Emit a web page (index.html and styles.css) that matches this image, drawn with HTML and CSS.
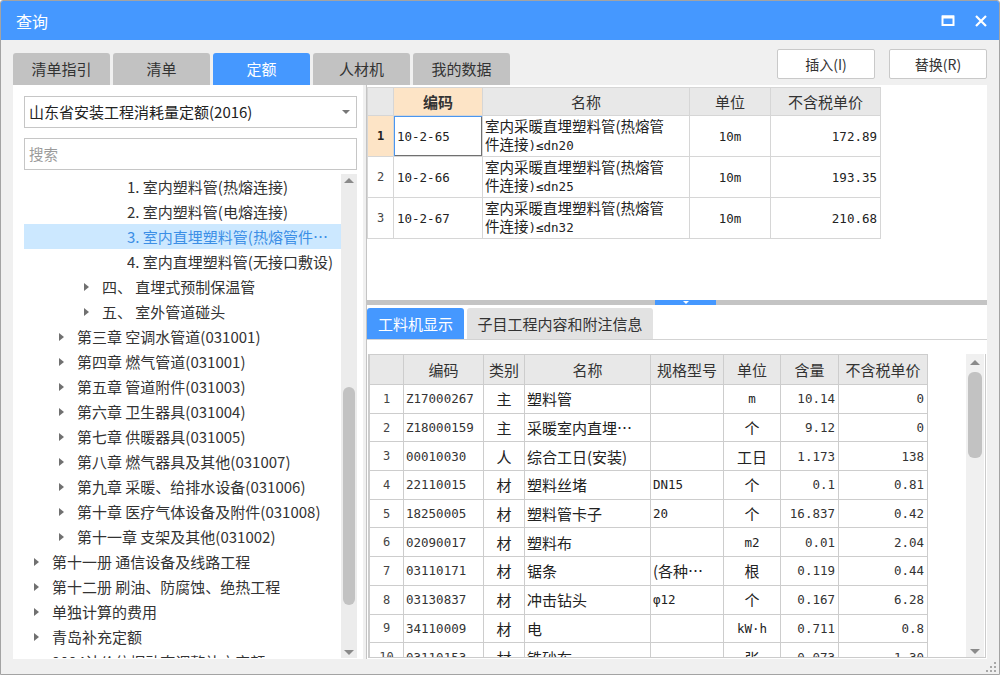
FILE: index.html
```html
<!DOCTYPE html>
<html lang="zh-CN">
<head>
<meta charset="utf-8">
<title>查询</title>
<link rel="stylesheet" href="styles.css">
</head>
<body>
<div class="window">
  <div class="titlebar">
    <span class="title">查询</span>
    <div class="wincontrols">
      <svg class="wbtn" width="14" height="12" viewBox="0 0 14 12"><rect x="1.5" y="1.5" width="11" height="8.5" fill="none" stroke="#fff" stroke-width="2"/><line x1="1" y1="2" x2="13" y2="2" stroke="#fff" stroke-width="3"/></svg>
      <svg class="wbtn" width="14" height="12" viewBox="0 0 14 12"><path d="M2 1 L12 11 M12 1 L2 11" stroke="#fff" stroke-width="2.2" fill="none"/></svg>
    </div>
  </div>
  <div class="body">
    <div class="toprow">
      <div class="tabs">
        <div class="tab">清单指引</div>
        <div class="tab">清单</div>
        <div class="tab active">定额</div>
        <div class="tab">人材机</div>
        <div class="tab">我的数据</div>
      </div>
      <div class="actions">
        <button class="btn">插入(I)</button>
        <button class="btn">替换(R)</button>
      </div>
    </div>
    <div class="main">
      <div class="left">
        <div class="select"><span>山东省安装工程消耗量定额(2016)</span><i class="caret"></i></div>
        <div class="search">搜索</div>
        <div class="treebox">
          <div class="tree">
            <div class="row l4"><i class="tri none"></i><span>1. 室内塑料管(热熔连接)</span></div>
            <div class="row l4"><i class="tri none"></i><span>2. 室内塑料管(电熔连接)</span></div>
            <div class="row l4 sel"><i class="tri none"></i><span>3. 室内直埋塑料管(热熔管件连接)</span></div>
            <div class="row l4"><i class="tri none"></i><span>4. 室内直埋塑料管(无接口敷设)</span></div>
            <div class="row l3"><i class="tri"></i><span>四、 直埋式预制保温管</span></div>
            <div class="row l3"><i class="tri"></i><span>五、 室外管道碰头</span></div>
            <div class="row l2"><i class="tri"></i><span>第三章 空调水管道(031001)</span></div>
            <div class="row l2"><i class="tri"></i><span>第四章 燃气管道(031001)</span></div>
            <div class="row l2"><i class="tri"></i><span>第五章 管道附件(031003)</span></div>
            <div class="row l2"><i class="tri"></i><span>第六章 卫生器具(031004)</span></div>
            <div class="row l2"><i class="tri"></i><span>第七章 供暖器具(031005)</span></div>
            <div class="row l2"><i class="tri"></i><span>第八章 燃气器具及其他(031007)</span></div>
            <div class="row l2"><i class="tri"></i><span>第九章 采暖、给排水设备(031006)</span></div>
            <div class="row l2"><i class="tri"></i><span>第十章 医疗气体设备及附件(031008)</span></div>
            <div class="row l2"><i class="tri"></i><span>第十一章 支架及其他(031002)</span></div>
            <div class="row l1"><i class="tri"></i><span>第十一册 通信设备及线路工程</span></div>
            <div class="row l1"><i class="tri"></i><span>第十二册 刷油、防腐蚀、绝热工程</span></div>
            <div class="row l1"><i class="tri"></i><span>单独计算的费用</span></div>
            <div class="row l1"><i class="tri"></i><span>青岛补充定额</span></div>
            <div class="row l1"><i class="tri"></i><span>2024计价依据动态调整补充定额</span></div>
          </div>
          <div class="vscroll">
            <i class="up"></i>
            <div class="track"><div class="thumb lthumb"></div></div>
            <i class="down"></i>
          </div>
        </div>
      </div>
      <div class="right">
        <div class="toppane">
          <table class="qt">
            <colgroup><col style="width:26px"><col style="width:89px"><col style="width:207px"><col style="width:81px"><col style="width:110px"></colgroup>
            <thead>
              <tr><th class="corner"></th><th class="hl">编码</th><th>名称</th><th>单位</th><th>不含税单价</th></tr>
            </thead>
            <tbody>
              <tr><td class="idx cur">1</td><td class="code focus">10-2-65</td><td class="name">室内采暖直埋塑料管(热熔管<br>件连接<span class="m">)≤dn20</span></td><td class="unit">10m</td><td class="price">172.89</td></tr>
              <tr><td class="idx">2</td><td class="code">10-2-66</td><td class="name">室内采暖直埋塑料管(热熔管<br>件连接<span class="m">)≤dn25</span></td><td class="unit">10m</td><td class="price">193.35</td></tr>
              <tr><td class="idx">3</td><td class="code">10-2-67</td><td class="name">室内采暖直埋塑料管(热熔管<br>件连接<span class="m">)≤dn32</span></td><td class="unit">10m</td><td class="price">210.68</td></tr>
            </tbody>
          </table>
        </div>
        <div class="splitter"><div class="grip"><i></i></div></div>
        <div class="bottompane">
          <div class="subtabs">
            <div class="subtab active">工料机显示</div>
            <div class="subtab">子目工程内容和附注信息</div>
          </div>
          <div class="gridbox">
            <table class="bt">
              <colgroup><col style="width:34px"><col style="width:80px"><col style="width:41px"><col style="width:126px"><col style="width:73px"><col style="width:57px"><col style="width:58px"><col style="width:89px"></colgroup>
              <thead>
                <tr><th></th><th>编码</th><th>类别</th><th>名称</th><th>规格型号</th><th>单位</th><th>含量</th><th>不含税单价</th></tr>
              </thead>
              <tbody>
                <tr><td class="idx">1</td><td class="code">Z17000267</td><td class="cat">主</td><td class="name">塑料管</td><td class="spec"></td><td class="unit m">m</td><td class="num">10.14</td><td class="num">0</td></tr>
                <tr><td class="idx">2</td><td class="code">Z18000159</td><td class="cat">主</td><td class="name">采暖室内直埋…</td><td class="spec"></td><td class="unit">个</td><td class="num">9.12</td><td class="num">0</td></tr>
                <tr><td class="idx">3</td><td class="code">00010030</td><td class="cat">人</td><td class="name">综合工日(安装)</td><td class="spec"></td><td class="unit">工日</td><td class="num">1.173</td><td class="num">138</td></tr>
                <tr><td class="idx">4</td><td class="code">22110015</td><td class="cat">材</td><td class="name">塑料丝堵</td><td class="spec m">DN15</td><td class="unit">个</td><td class="num">0.1</td><td class="num">0.81</td></tr>
                <tr><td class="idx">5</td><td class="code">18250005</td><td class="cat">材</td><td class="name">塑料管卡子</td><td class="spec m">20</td><td class="unit">个</td><td class="num">16.837</td><td class="num">0.42</td></tr>
                <tr><td class="idx">6</td><td class="code">02090017</td><td class="cat">材</td><td class="name">塑料布</td><td class="spec"></td><td class="unit m">m2</td><td class="num">0.01</td><td class="num">2.04</td></tr>
                <tr><td class="idx">7</td><td class="code">03110171</td><td class="cat">材</td><td class="name">锯条</td><td class="spec">(各种…</td><td class="unit">根</td><td class="num">0.119</td><td class="num">0.44</td></tr>
                <tr><td class="idx">8</td><td class="code">03130837</td><td class="cat">材</td><td class="name">冲击钻头</td><td class="spec m">φ12</td><td class="unit">个</td><td class="num">0.167</td><td class="num">6.28</td></tr>
                <tr><td class="idx">9</td><td class="code">34110009</td><td class="cat">材</td><td class="name">电</td><td class="spec"></td><td class="unit m">kW·h</td><td class="num">0.711</td><td class="num">0.8</td></tr>
                <tr><td class="idx">10</td><td class="code">03110153</td><td class="cat">材</td><td class="name">铁砂布</td><td class="spec"></td><td class="unit">张</td><td class="num">0.073</td><td class="num">1.30</td></tr>
              </tbody>
            </table>
            <div class="vscroll bscroll">
              <i class="up"></i>
              <div class="track"><div class="thumb bthumb"></div></div>
              <i class="down"></i>
            </div>
          </div>
        </div>
      </div>
    </div>
    <div class="statusbar">
      <svg class="sizegrip" width="12" height="12" viewBox="0 0 12 12" fill="#a8a8a8"><rect x="9" y="1" width="2" height="2"/><rect x="5" y="5" width="2" height="2"/><rect x="9" y="5" width="2" height="2"/><rect x="1" y="9" width="2" height="2"/><rect x="5" y="9" width="2" height="2"/><rect x="9" y="9" width="2" height="2"/></svg>
    </div>
  </div>
</div>
</body>
</html>
```
FILE: styles.css
```css
html, body { margin: 0; padding: 0; }
body {
  width: 1000px; height: 675px; overflow: hidden;
  font-family: "Noto Sans CJK SC", "Noto Sans", sans-serif;
  color: #333; background: #fff;
}
.window {
  box-sizing: border-box; width: 1000px; height: 675px;
  border: 1px solid #a3a3a3; border-radius: 3px 3px 0 0;
  background: #f0f0f0; display: flex; flex-direction: column; overflow: hidden;
}
.titlebar {
  height: 39px; flex: none; background: #4598ff;
  display: flex; align-items: center; justify-content: space-between;
  padding: 0 11px 0 15px;
}
.title { color: #fff; font-size: 16px; line-height: 20px; }
.wincontrols { display: flex; gap: 19px; align-items: center; }
.wbtn { display: block; }

.body { flex: 1; display: flex; flex-direction: column; padding: 0 12px; min-height: 0; }
.toprow { height: 45px; flex: none; display: flex; justify-content: space-between; }
.tabs { display: flex; gap: 3px; align-self: flex-end; }
.tab {
  width: 97px; height: 32px; background: #c2c2c2; border-radius: 3px 3px 0 0;
  font-size: 15px; line-height: 32px; text-align: center; color: #333;
}
.tab.active { background: #4598ff; color: #fff; }
.actions { display: flex; gap: 14px; padding-top: 9px; }
.btn {
  width: 98px; height: 30px; background: #fff; border: 1px solid #c9c9c9; border-radius: 2px;
  font-family: inherit; font-size: 14px; color: #333; padding: 0;
}

.main { flex: 1; display: flex; gap: 3px; min-height: 0; }
.left {
  width: 350px; flex: none; background: #fff; display: flex; flex-direction: column;
  padding: 11px 6px 1px 11px; box-sizing: border-box;
}
.select, .search {
  box-sizing: border-box; height: 32px; border: 1px solid #c6c6c6; flex: none;
  line-height: 30px; padding-left: 4px;
}
.select { display: flex; justify-content: space-between; align-items: center; color: #222; font-size: 15px; }
.caret {
  width: 0; height: 0; margin-right: 6px;
  border-left: 4px solid transparent; border-right: 4px solid transparent; border-top: 4px solid #777;
}
.search { margin-top: 10px; color: #9b9b9b; font-size: 14.5px; }
.treebox { flex: 1; margin-top: 4px; display: flex; min-height: 0; overflow: hidden; }
.tree { width: 317px; flex: none; overflow: hidden; }
.row {
  height: 25px; display: flex; align-items: center; white-space: nowrap;
  font-size: 15px; color: #333; overflow: hidden;
}
.row span { overflow: hidden; text-overflow: ellipsis; }
.row.l1 { padding-left: 10px; }
.row.l2 { padding-left: 35px; }
.row.l3 { padding-left: 60px; }
.row.l4 { padding-left: 85px; }
.row.sel { background: #cce8ff; color: #3c8fe6; }
.tri {
  width: 0; height: 0; flex: none; margin-right: 13px;
  border-left: 5px solid #707070; border-top: 4px solid transparent; border-bottom: 4px solid transparent;
}
.tri.none { border-left-color: transparent; }

.vscroll { width: 16px; flex: none; background: #ececec; display: flex; flex-direction: column; align-items: center; }
.vscroll .up, .vscroll .down {
  width: 0; height: 0; flex: none;
  border-left: 5px solid transparent; border-right: 5px solid transparent;
}
.vscroll .up { border-bottom: 5px solid #8a8a8a; margin: 4px 0 5px; }
.vscroll .down { border-top: 5px solid #8a8a8a; margin: 5px 0 3px; }
.track { flex: 1; width: 100%; position: relative; }
.thumb { position: absolute; left: 2px; right: 2px; background: #c2c2c2; border-radius: 6px; }
.lthumb { top: 199px; bottom: 40px; }

.right { flex: 1; display: flex; flex-direction: column; min-width: 0; border-left: 1px solid #c4c4c4; }
.toppane { height: 215px; flex: none; background: #fff; padding-top: 2px; box-sizing: border-box; }
table { border-collapse: collapse; table-layout: fixed; }
.qt { width: 513px; }
.qt th, .qt td { border: 1px solid #d6d6d6; padding: 0; }
.qt th { height: 27px; background: #e8e8e8; font-weight: normal; font-size: 15px; color: #333; }
.qt th.hl { background: #fde4c6; font-weight: bold; }
.qt td { height: 40px; font-size: 14.5px; color: #222; }
.qt td.idx { text-align: center; font-family: "DejaVu Sans Mono", monospace; font-size: 12px; color: #444; }
.qt td.idx.cur { background: #fde4c6; font-weight: bold; color: #222; }
.qt td.code { font-family: "DejaVu Sans Mono", monospace; font-size: 12.5px; padding-left: 3px; }
.qt td.focus { box-shadow: inset 1px 1px 0 #4a96f0, inset -1px -1px 0 #707070; }
.qt td.name { line-height: 18px; padding-left: 2px; white-space: nowrap; overflow: hidden; }
.m { font-family: "DejaVu Sans Mono", "Noto Sans CJK SC", monospace; font-size: 12.5px; }
.qt td.unit { text-align: center; font-family: "DejaVu Sans Mono", monospace; font-size: 12.5px; }
.qt td.price { text-align: right; padding-right: 3px; font-family: "DejaVu Sans Mono", monospace; font-size: 12.5px; }

.splitter { height: 5px; flex: none; background: #c4c4c4; display: flex; justify-content: center; padding-left: 17px; }
.splitter .grip { width: 61px; height: 5px; background: #4598ff; display: flex; justify-content: center; }
.splitter .grip i { width: 0; height: 0; border-left: 3px solid transparent; border-right: 3px solid transparent; border-top: 3px solid #fff; margin-top: 1px; }

.bottompane { flex: 1; background: #fff; display: flex; flex-direction: column; min-height: 0; padding-top: 3px; }
.subtabs { display: flex; gap: 3px; height: 31px; flex: none; border-bottom: 1px solid #d3d3d3; }
.subtab {
  padding: 0 12px; height: 31px; background: #e2e2e2; border-radius: 3px 3px 0 0;
  font-size: 15px; line-height: 31px; color: #333;
}
.subtab.active { background: #4598ff; color: #fff; width: 97px; box-sizing: border-box; text-align: center; padding: 0; }
.subtab + .subtab { width: 186px; box-sizing: border-box; text-align: center; padding: 0; }
.gridbox {
  flex: 1; margin: 14px 1px 1px 1px; border: 1px solid #cbcbcb; border-top: none;
  display: flex; justify-content: space-between; min-height: 0; overflow: hidden;
}
.bt { width: 558px; align-self: flex-start; }
.bt th, .bt td { border: 1px solid #cdcdcd; padding: 0; }
.bt th { height: 29px; background: #e8e8e8; font-weight: normal; font-size: 15px; color: #333; }
.bt td { height: 27.7px; font-size: 15px; color: #222; white-space: nowrap; overflow: hidden; }
.bt td.idx { text-align: center; font-family: "DejaVu Sans Mono", monospace; font-size: 12px; color: #444; }
.bt td.code { font-family: "DejaVu Sans Mono", monospace; font-size: 12.5px; padding-left: 2px; color: #333; }
.bt td.cat { text-align: center; }
.bt td.name { padding-left: 2px; }
.bt td.spec { padding-left: 2px; }
.bt td.unit { text-align: center; }
.bt td.num { text-align: right; padding-right: 3px; font-family: "DejaVu Sans Mono", monospace; font-size: 12.5px; color: #333; }
.bt td.m, .bt td.spec.m { font-family: "DejaVu Sans Mono", monospace; font-size: 12.5px; }
.bscroll { width: 18px; background: #f0f0f0; margin-right: 1px; }
.bscroll .up { margin-top: 6px; }
.bthumb { top: 2px; bottom: 186px; }

.statusbar { height: 15px; flex: none; position: relative; }
.sizegrip { position: absolute; right: -10px; bottom: 1px; }
```
